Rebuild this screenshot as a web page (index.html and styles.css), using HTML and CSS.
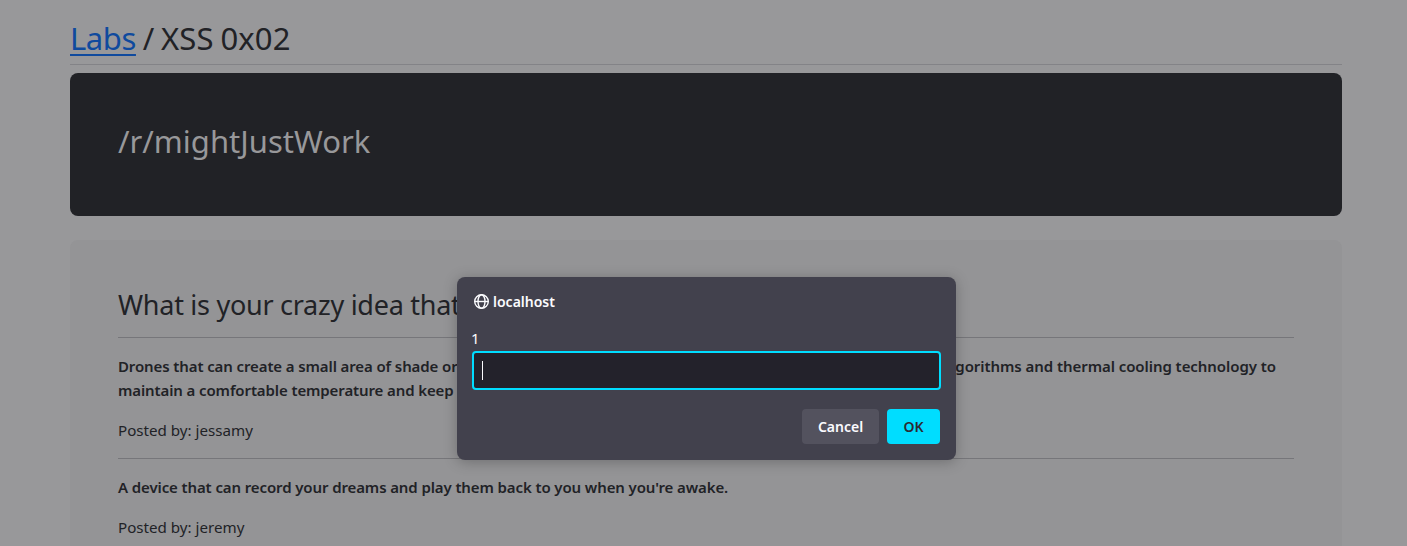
FILE: index.html
```html
<!DOCTYPE html>
<html lang="en">
<head>
<meta charset="utf-8">
<title>XSS 0x02</title>
<link rel="stylesheet" href="styles.css">
</head>
<body>
<main class="page">
  <h1 class="title"><a href="#">Labs</a><span class="crumb"> / XSS 0x02</span></h1>
  <section class="hero"><h2>/r/mightJustWork</h2></section>
  <section class="panel">
    <h3>What is your crazy idea that</h3>
    <article class="post">
      <p class="idea split"><span>Drones that can create a small area of shade or</span><span class="tail">gorithms and thermal cooling technology to</span></p>
      <p class="idea">maintain a comfortable temperature and keep</p>
      <p class="author">Posted by: jessamy</p>
    </article>
    <article class="post">
      <p class="idea">A device that can record your dreams and play them back to you when you're awake.</p>
      <p class="author">Posted by: jeremy</p>
    </article>
  </section>
</main>
<div class="dialog" role="dialog">
  <div class="origin">
    <svg width="16" height="16" viewBox="0 0 16 16" fill="none" stroke="#fbfbfe" stroke-width="1.4"><circle cx="8.5" cy="8.5" r="6.8"/><ellipse cx="8.5" cy="8.5" rx="3.5" ry="6.8"/><path d="M1.7 8.5h13.6"/></svg>
    <span class="host">localhost</span>
  </div>
  <div class="message">1</div>
  <div class="field"><span class="caret"></span></div>
  <div class="actions"><button class="cancel">Cancel</button><button class="ok">OK</button></div>
</div>
</body>
</html>
```
FILE: styles.css
```css
* { box-sizing: border-box; }
body { margin: 0; height: 546px; overflow: hidden; background: #98989a; color: #212226; font: 16px/24px "Noto Sans", sans-serif; }
.page { width: 1272px; height: 546px; margin-left: 70px; padding-top: 20px; overflow: hidden; }
h1, h2, h3, p { margin: 0; font-weight: 400; }
.title { height: 45px; border-bottom: 1px solid #838387; font-size: 31px; line-height: 37px; }
.title a { color: #0f4a9e; letter-spacing: -.4px; text-decoration-thickness: 2px; text-underline-offset: 4px; }
.crumb { word-spacing: -1.5px; letter-spacing: .15px; }
.hero { height: 143px; margin-top: 8px; padding: 48px; border-radius: 8px; background: #212226; color: #98989a; }
.hero h2 { font-size: 31px; line-height: 41px; }
.panel { height: 306px; margin-top: 24px; padding: 48px 48px 0; border-radius: 8px 8px 0 0; background: #949496; }
.panel h3 { height: 49px; font-size: 27px; line-height: 33px; letter-spacing: -.27px; }
.post { padding: 16px 0; border-top: 1px solid #76767a; }
.post .idea { font-size: 15px; font-weight: 600; letter-spacing: -.11px; white-space: nowrap; }
.split { display: flex; justify-content: space-between; }
.post .tail { margin-right: 18px; letter-spacing: -.06px; }
.author { margin-top: 16px; font-size: 15.15px; }
.dialog { position: absolute; left: 457px; top: 277px; width: 499px; height: 183px; padding: 16px 15px; border-radius: 8px; background: #42414d; color: #fbfbfe; font-size: 15px; box-shadow: 0 2px 14px rgba(0,0,0,.25); }
.origin { display: flex; align-items: center; gap: 4px; height: 16px; padding-left: 1px; font-size: 14px; font-weight: 600; }
.host { padding-top: 2px; }
.message { height: 24px; margin-top: 17px; margin-left: -1px; font-size: 15px; }
.field { height: 39px; margin-top: 1px; padding: 8px; border: 2px solid #00ddff; border-radius: 4px; background: #23222b; }
.caret { display: block; width: 1px; height: 19px; background: #fbfbfe; }
.actions { display: flex; justify-content: flex-end; gap: 8px; margin: 19px 1px 0 0; }
.actions button { height: 35px; padding: 0; border: 0; border-radius: 4px; font: 600 14px "Noto Sans", sans-serif; }
.cancel { width: 77px; background: #53525e; color: #fbfbfe; }
.ok { width: 53px; background: #00ddff; color: #2b2a33; }
```
